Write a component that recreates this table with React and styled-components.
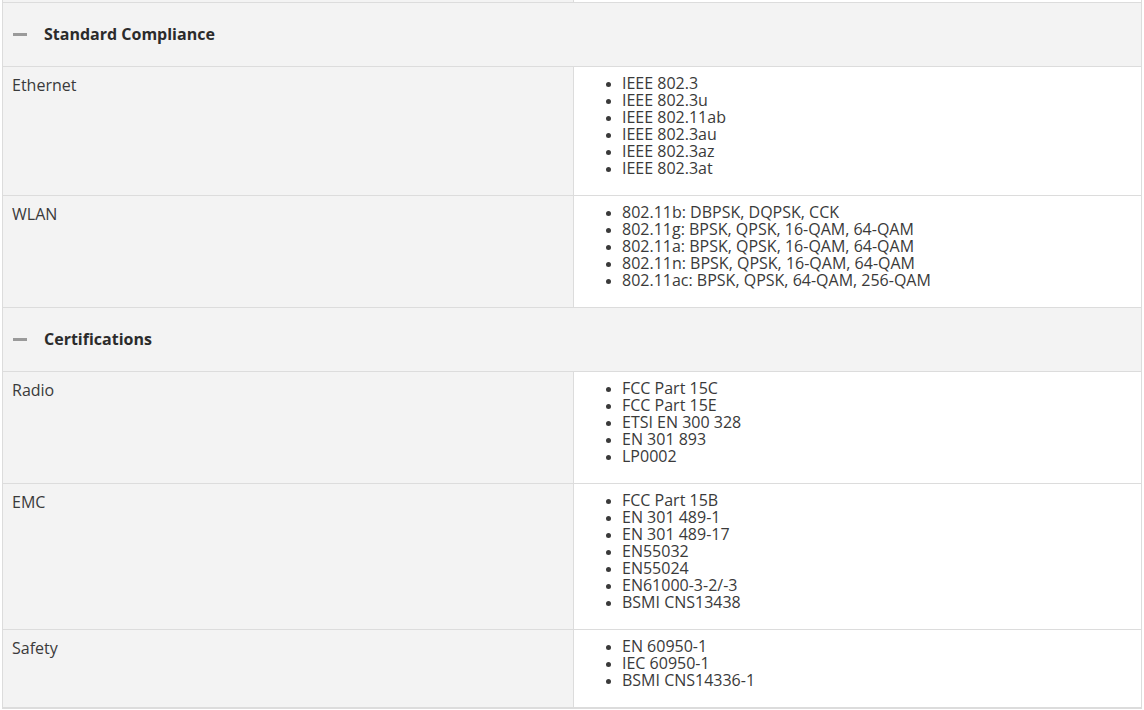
import React from "react";
import styled, { createGlobalStyle } from "styled-components";

const GlobalStyle = createGlobalStyle`
  body {
    margin: 0;
    background: #fff;
    font-family: "Open Sans", "Liberation Sans", sans-serif;
    color: #333;
  }
`;

const Page = styled.div`
  padding-left: 2px;
  width: 1140px;
`;

const Table = styled.div`
  border-left: 1px solid #dcdcdc;
  border-right: 1px solid #dcdcdc;
  border-bottom: 1px solid #dcdcdc;
`;

const Row = styled.div`
  display: grid;
  grid-template-columns: 571px 1fr;
  border-bottom: 1px solid #dcdcdc;
  height: ${(p) => (p.$stub ? "2px" : "auto")};
  overflow: hidden;
`;

const Label = styled.div`
  background: #f3f3f3;
  border-right: 1px solid #dcdcdc;
  padding: ${(p) => (p.$stub ? "0" : "10px 9px")};
  font-size: 16px;
  line-height: 17px;
  color: #3a3a3a;
`;

const Value = styled.div`
  background: #fff;
  padding: ${(p) => (p.$stub ? "0" : "8px 8px 18px")};
`;

const List = styled.ul`
  margin: 0;
  padding-left: 40px;
  font-size: 16px;
  line-height: 17px;
  color: #3a3a3a;
  list-style: disc;

  li::marker {
    font-size: 13px;
  }
`;

const Section = styled.div`
  display: flex;
  align-items: center;
  gap: 17px;
  height: 64px;
  padding-left: 10px;
  padding-bottom: 1px;
  box-sizing: border-box;
  background: #f3f3f3;
  border-bottom: 1px solid #dcdcdc;
  font-size: 16px;
  font-weight: 700;
  color: #2b2b2b;
`;

const Minus = styled.span`
  display: block;
  width: 14px;
  height: 3px;
  background: #9a9a9a;
`;

const data = [
  {
    title: "Standard Compliance",
    rows: [
      {
        label: "Ethernet",
        items: ["IEEE 802.3", "IEEE 802.3u", "IEEE 802.11ab", "IEEE 802.3au", "IEEE 802.3az", "IEEE 802.3at"],
      },
      {
        label: "WLAN",
        items: [
          "802.11b: DBPSK, DQPSK, CCK",
          "802.11g: BPSK, QPSK, 16-QAM, 64-QAM",
          "802.11a: BPSK, QPSK, 16-QAM, 64-QAM",
          "802.11n: BPSK, QPSK, 16-QAM, 64-QAM",
          "802.11ac: BPSK, QPSK, 64-QAM, 256-QAM",
        ],
      },
    ],
  },
  {
    title: "Certifications",
    rows: [
      {
        label: "Radio",
        items: ["FCC Part 15C", "FCC Part 15E", "ETSI EN 300 328", "EN 301 893", "LP0002"],
      },
      {
        label: "EMC",
        items: ["FCC Part 15B", "EN 301 489-1", "EN 301 489-17", "EN55032", "EN55024", "EN61000-3-2/-3", "BSMI CNS13438"],
      },
      {
        label: "Safety",
        items: ["EN 60950-1", "IEC 60950-1", "BSMI CNS14336-1"],
      },
    ],
  },
];

export default function App() {
  return (
    <Page>
      <GlobalStyle />
      <Table>
        <Row $stub>
          <Label $stub />
          <Value $stub />
        </Row>
        {data.map((sec) => (
          <React.Fragment key={sec.title}>
            <Section>
              <Minus />
              {sec.title}
            </Section>
            {sec.rows.map((r) => (
              <Row key={r.label}>
                <Label>{r.label}</Label>
                <Value>
                  <List>
                    {r.items.map((it) => (
                      <li key={it}>{it}</li>
                    ))}
                  </List>
                </Value>
              </Row>
            ))}
          </React.Fragment>
        ))}
      </Table>
    </Page>
  );
}
